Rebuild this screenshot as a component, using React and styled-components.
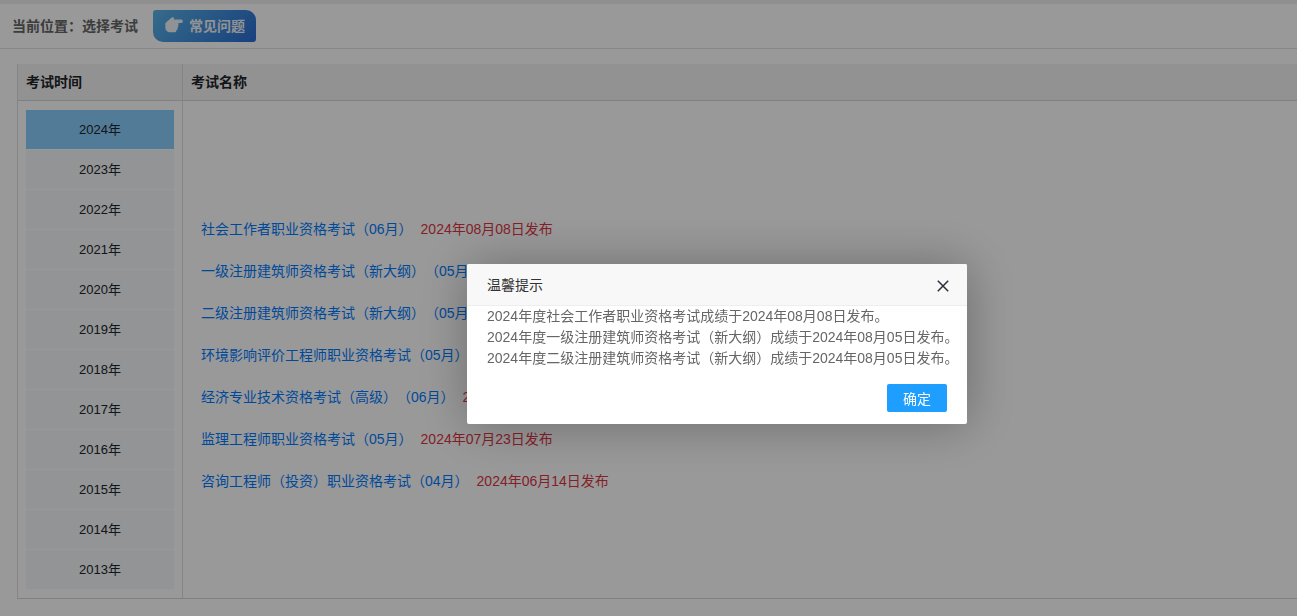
import { useState } from 'react';
import styled, { createGlobalStyle } from 'styled-components';

const anos = [2024, 2023, 2022, 2021, 2020, 2019, 2018, 2017, 2016, 2015, 2014, 2013];

const exames = [
    { nome: '社会工作者职业资格考试（06月）', data: '2024年08月08日发布' },
    { nome: '一级注册建筑师资格考试（新大纲）（05月）' },
    { nome: '二级注册建筑师资格考试（新大纲）（05月）' },
    { nome: '环境影响评价工程师职业资格考试（05月）' },
    { nome: '经济专业技术资格考试（高级）（06月）', data: '2024年07月26日发布' },
    { nome: '监理工程师职业资格考试（05月）', data: '2024年07月23日发布' },
    { nome: '咨询工程师（投资）职业资格考试（04月）', data: '2024年06月14日发布' },
];

const avisos = [
    '2024年度社会工作者职业资格考试成绩于2024年08月08日发布。',
    '2024年度一级注册建筑师资格考试（新大纲）成绩于2024年08月05日发布。',
    '2024年度二级注册建筑师资格考试（新大纲）成绩于2024年08月05日发布。',
];

export default function App() {
    const [ano, setAno] = useState(2024);
    const [aberto, setAberto] = useState(true);

    return (
        <>
            <GlobalStyle />
            <Topo>
                <Local>当前位置：选择考试</Local>
                <Duvidas type="button">
                    <svg width="18" height="16" viewBox="0 0 18 16" fill="currentColor" aria-hidden="true">
                        <path d="M1 5.6 5.6 1.6C6.6.5 7.8 0 8.6.4c.8.5.6 1.300.1 2.200h7.600c2 0 2 3.300 0 3.300h-3.300c.9.8.8 2-.1 2.500.7.9.5 2.100-.5 2.500.5 1-.1 2-1 2.300.1 1.300-.7 2.100-2 2.100H5.200C2.500 15.300.3 13 .3 10.400V7.200c0-.6.2-1.200.7-1.600z" />
                    </svg>
                    常见问题
                </Duvidas>
            </Topo>
            <Conteudo>
                <Tabela>
                    <thead>
                        <tr>
                            <Titulo $estreita>考试时间</Titulo>
                            <Titulo>考试名称</Titulo>
                        </tr>
                    </thead>
                    <tbody>
                        <tr>
                            <Celula>
                                <Anos>
                                    {anos.map((item) => (
                                        <Ano key={item} type="button" $ativo={item === ano} onClick={() => setAno(item)}>
                                            {item}年
                                        </Ano>
                                    ))}
                                </Anos>
                            </Celula>
                            <Celula>
                                <Exames>
                                    {exames.map(({ nome, data }) => (
                                        <Exame key={nome}>
                                            <a href="#exame">{nome}</a>
                                            {data && <span>{data}</span>}
                                        </Exame>
                                    ))}
                                </Exames>
                            </Celula>
                        </tr>
                    </tbody>
                </Tabela>
            </Conteudo>
            {aberto && (
                <Fundo>
                    <Janela role="dialog" aria-labelledby="aviso">
                        <Cabecalho>
                            <h2 id="aviso">温馨提示</h2>
                            <Fechar type="button" aria-label="关闭" onClick={() => setAberto(false)}>
                                <svg width="12" height="12" viewBox="0 0 12 12" stroke="#2d2c3b" strokeWidth="1.5">
                                    <path d="M.8.8l10.4 10.4M11.2.8L.8 11.2" />
                                </svg>
                            </Fechar>
                        </Cabecalho>
                        <Mensagem>
                            {avisos.map((texto) => (
                                <p key={texto}>{texto}</p>
                            ))}
                        </Mensagem>
                        <Rodape>
                            <Confirmar type="button" onClick={() => setAberto(false)}>确定</Confirmar>
                        </Rodape>
                    </Janela>
                </Fundo>
            )}
        </>
    );
}

const GlobalStyle = createGlobalStyle`
    * {
        box-sizing: border-box;
        margin: 0;
        padding: 0;
    }
    body {
        background-color: #fff;
        color: #212529;
        font-family: "Liberation Sans", "Noto Sans CJK SC", sans-serif;
        font-size: 14px;
        line-height: 21px;
        text-spacing-trim: space-all;
    }
    button {
        border: 0;
        font-family: inherit;
        cursor: pointer;
    }
    a {
        text-decoration: none;
    }
`;

const Topo = styled.header`
    display: flex;
    align-items: center;
    column-gap: 15px;
    height: 49px;
    padding: 0 12px;
    border-top: 4px solid #eee;
    border-bottom: 1px solid #e2e2e2;
`;

const Local = styled.span`
    color: #666;
    font-weight: bold;
`;

const Duvidas = styled.button`
    display: flex;
    align-items: center;
    column-gap: 6px;
    height: 32px;
    padding: 0 11px 2px 12px;
    border-radius: 3px 10px 3px 10px;
    background: linear-gradient(135deg, #5ab4e6, #2a6cd4);
    color: #f0f4f8;
    font-size: 14px;
    font-weight: bold;
`;

const Conteudo = styled.main`
    padding: 15px 0 17px 17px;
`;

const Tabela = styled.table`
    width: 100%;
    border-collapse: separate;
    border-spacing: 0;
`;

const Titulo = styled.th`
    width: ${({ $estreita }) => ($estreita ? '165px' : 'auto')};
    height: 37px;
    padding: 0 8px;
    border-left: 1px solid #dedede;
    border-bottom: 1px solid #d6d6d6;
    background-color: #f3f3f3;
    text-align: left;
`;

const Celula = styled.td`
    padding: 9px 8px;
    border-left: 1px solid #dedede;
    border-bottom: 1px solid #d6d6d6;
    vertical-align: middle;
`;

const Anos = styled.div`
    display: flex;
    flex-direction: column;
    row-gap: 1px;
`;

const Ano = styled.button`
    height: 39px;
    padding-bottom: 2px;
    background-color: ${({ $ativo }) => ($ativo ? '#87cefa' : '#f5f7fa')};
    color: #212529;
    font-size: 13px;
`;

const Exames = styled.ul`
    padding: 10px 10px 0;
    list-style: none;
`;

const Exame = styled.li`
    display: flex;
    column-gap: 8px;
    line-height: 42px;
    a {
        color: #007bff;
    }
    span {
        color: #dc3545;
    }
`;

const Fundo = styled.div`
    position: fixed;
    inset: 0;
    display: flex;
    justify-content: center;
    align-items: flex-start;
    padding: 264px 0 0 137px;
    background-color: rgba(0, 0, 0, 0.4);
`;

const Janela = styled.section`
    width: 500px;
    border-radius: 2px;
    background-color: #fff;
    box-shadow: 1px 1px 50px rgba(0, 0, 0, 0.3);
`;

const Cabecalho = styled.div`
    display: flex;
    justify-content: space-between;
    align-items: center;
    height: 42px;
    padding: 2px 16px 0 20px;
    border-bottom: 1px solid #eee;
    border-radius: 2px 2px 0 0;
    background-color: #f8f8f8;
    h2 {
        color: #333;
        font-size: 14px;
        font-weight: normal;
    }
`;

const Fechar = styled.button`
    display: flex;
    justify-content: center;
    align-items: center;
    width: 16px;
    height: 16px;
    background: none;
`;

const Mensagem = styled.div`
    padding: 0 0 0 20px;
    color: #666;
`;

const Rodape = styled.div`
    display: flex;
    justify-content: flex-end;
    padding: 15px 20px 12px;
`;

const Confirmar = styled.button`
    width: 60px;
    height: 28px;
    border-radius: 2px;
    background-color: #1e9fff;
    color: #fff;
    font-size: 14px;
`;
